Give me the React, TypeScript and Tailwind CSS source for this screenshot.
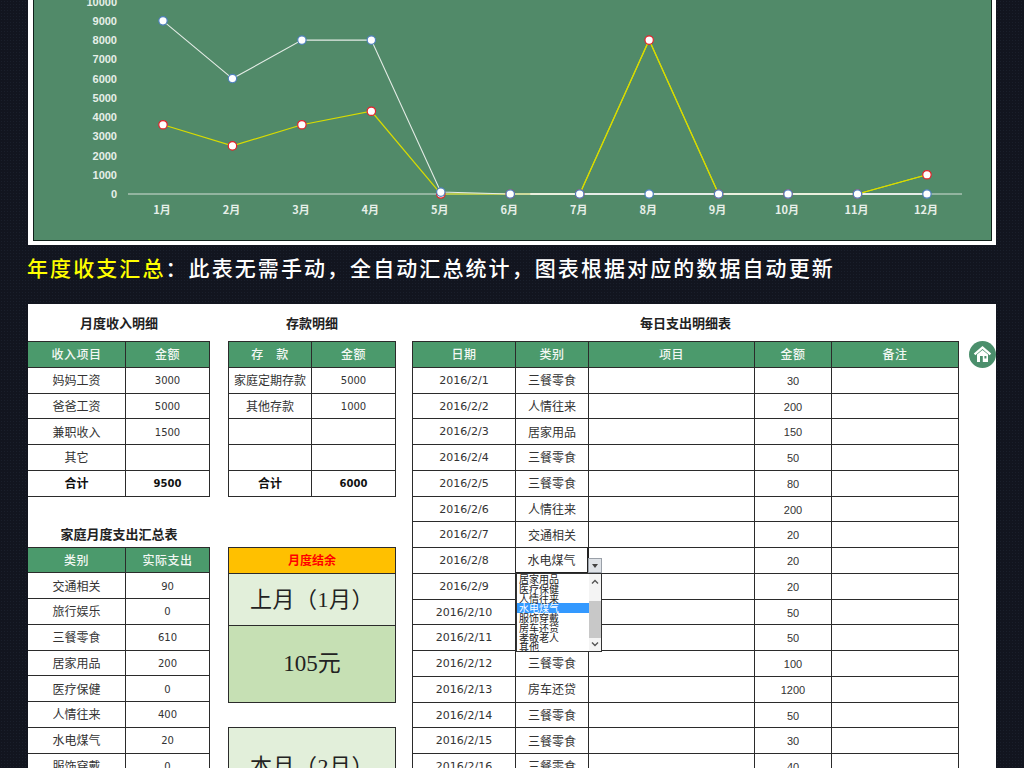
import React from "react";

const cjk = "font-['Noto_Sans_CJK_SC',sans-serif]";

const months = ["1月", "2月", "3月", "4月", "5月", "6月", "7月", "8月", "9月", "10月", "11月", "12月"];
const income = [9000, 6000, 8000, 8000, 100, 0, 0, 0, 0, 0, 0, 0];
const spend = [3600, 2500, 3600, 4300, 0, 0, 0, 8000, 0, 0, 0, 1000];
const ticks = [10000, 9000, 8000, 7000, 6000, 5000, 4000, 3000, 2000, 1000, 0];

const px = (i: number) => 163 + i * 69.45;
const py = (v: number) => 194 - (v / 1000) * 19.24;
const line = (d: number[]) => d.map((v, i) => `${px(i)},${py(v)}`).join(" ");

const daily = [
  ["2016/2/1", "三餐零食", "30"],
  ["2016/2/2", "人情往来", "200"],
  ["2016/2/3", "居家用品", "150"],
  ["2016/2/4", "三餐零食", "50"],
  ["2016/2/5", "三餐零食", "80"],
  ["2016/2/6", "人情往来", "200"],
  ["2016/2/7", "交通相关", "20"],
  ["2016/2/8", "水电煤气", "20"],
  ["2016/2/9", "三餐零食", "20"],
  ["2016/2/10", "三餐零食", "50"],
  ["2016/2/11", "三餐零食", "50"],
  ["2016/2/12", "三餐零食", "100"],
  ["2016/2/13", "房车还贷", "1200"],
  ["2016/2/14", "三餐零食", "50"],
  ["2016/2/15", "三餐零食", "30"],
  ["2016/2/16", "三餐零食", "40"],
];

const dropdown = ["居家用品", "医疗保健", "人情往来", "水电煤气", "服饰穿戴", "房车还贷", "孝敬老人", "其他"];

function Chart() {
  return (
    <div className="mx-[28px] bg-white pr-[4px] pb-[4px] pl-[5px]">
      <div className="border-x border-b border-[#10201a] bg-[#518a69]">
        <svg viewBox="34 0 957 240" width="957" height="240" className="block font-['Noto_Sans_CJK_SC',sans-serif]">
          {ticks.map((t) => (
            <text key={t} x="117" y={py(t) + 4} textAnchor="end" fontSize="11" fontWeight="700" fill="#e6efe8" fontFamily="'Liberation Sans'">
              {t}
            </text>
          ))}
          {months.map((m, i) => (
            <text key={m} x={px(i) - 1} y="214" textAnchor="middle" fontSize="11" fontWeight="700" fill="#e6efe8">
              {m}
            </text>
          ))}
          <line x1="128" y1="194" x2="962" y2="194" stroke="#d5dfd8" strokeWidth="1" />
          <polyline points={line(spend)} fill="none" stroke="#d8dc00" strokeWidth="1.2" />
          <polyline points={line(income)} fill="none" stroke="#e4ece6" strokeWidth="1.1" />
          {/* flat stretch of the income line sits on top of the spend line */}
          <line x1={px(5) + 20} y1="194" x2={px(11)} y2="194" stroke="#f4f7f5" strokeWidth="1.6" />
          <polyline points={`${px(10)},194 ${px(11)},${py(1000)}`} fill="none" stroke="#d8dc00" strokeWidth="1.2" />
          <polyline points={`${px(6)},194 ${px(7)},${py(8000)} ${px(8)},194`} fill="none" stroke="#d8dc00" strokeWidth="1.2" />
          {spend.map((v, i) => (
            <circle key={i} cx={px(i)} cy={py(v)} r="4.2" fill="#fff" stroke="#e8202a" strokeWidth="1.2" />
          ))}
          {income.map((v, i) => (
            <circle key={i} cx={px(i)} cy={py(v)} r="4.2" fill="#fff" stroke="#4f81bd" strokeWidth="1.2" />
          ))}
        </svg>
      </div>
    </div>
  );
}

function Cell({ children, className = "" }: { children?: React.ReactNode; className?: string }) {
  return (
    <div className={`flex items-center justify-center border-r border-b border-[#2b2b2b] text-[12px] text-[#333] ${className}`}>
      {children}
    </div>
  );
}

function Head({ children }: { children?: React.ReactNode }) {
  return <Cell className="bg-[#4b9a6c] font-medium tracking-[0.5px] !text-[#f2f7f3]">{children}</Cell>;
}

function Num({ children, bold }: { children?: React.ReactNode; bold?: boolean }) {
  return (
    <Cell className={`pt-[1px] font-['DejaVu_Sans',sans-serif] !text-[10px] ${bold ? "font-bold !text-[#111]" : ""}`}>
      {children}
    </Cell>
  );
}

function Title({ children }: { children: React.ReactNode }) {
  return <div className="flex h-[37px] items-center justify-center text-[13px] font-bold text-[#222]">{children}</div>;
}

function TwoCol({ rows, cols }: { rows: (string | undefined)[][]; cols: string }) {
  return (
    <div className={`grid auto-rows-[25.75px] border-t border-[#2b2b2b] ${cols}`}>
      <Head>{rows[0][0]}</Head>
      <Head>{rows[0][1]}</Head>
      {rows.slice(1).map((r, i) => (
        <React.Fragment key={i}>
          <Cell>{r[0]}</Cell>
          <Num>{r[1]}</Num>
        </React.Fragment>
      ))}
    </div>
  );
}

function Dropdown() {
  return (
    <>
      <div className="absolute top-[217px] left-[176px] flex h-[15px] w-[14px] items-center justify-center border border-[#9aa0a8] bg-[#dfe3e8]">
        <span className="mt-[1px] border-x-[3px] border-t-[4px] border-x-transparent border-t-[#444]" />
      </div>
      <div className="absolute top-[232px] left-[104px] flex h-[79px] w-[86px] border border-[#333] bg-white">
        <div className="w-[72px] text-[10px] leading-[9.75px] text-[#222]">
          {dropdown.map((d) => (
            <div key={d} className={`h-[9.75px] pl-[2px] ${d === "水电煤气" ? "bg-[#3399ff] text-white" : ""}`}>
              {d}
            </div>
          ))}
        </div>
        <div className="flex w-[12px] flex-col items-center bg-[#f4f4f4]">
          <svg viewBox="0 0 8 6" width="8" height="6" className="mt-[5px] block">
            <path d="M1 4.5 L4 1.5 L7 4.5" fill="none" stroke="#555" strokeWidth="1.4" />
          </svg>
          <div className="mt-[16px] h-[37px] w-full bg-[#c8c8c8]" />
          <svg viewBox="0 0 8 6" width="8" height="6" className="mt-[3px] block">
            <path d="M1 1.5 L4 4.5 L7 1.5" fill="none" stroke="#555" strokeWidth="1.4" />
          </svg>
        </div>
      </div>
    </>
  );
}

function HomeIcon() {
  return (
    <div className="mt-[37px] h-[27px] w-[27px]">
      <svg viewBox="0 0 27 27" width="27" height="27" className="block">
        <circle cx="13.5" cy="13.5" r="13.5" fill="#4b8f6c" />
        <path d="M13.5 5 L22.2 12.6 L20.7 14.2 L13.5 8 L6.3 14.2 L4.8 12.6 Z" fill="#fff" />
        <path
          fillRule="evenodd"
          d="M13.5 9 L19 13.6 V21 H8 V13.6 Z M11 15 V21 H13.8 V15 Z M15.4 15 V17.4 H17.4 V15 Z"
          fill="#fff"
        />
      </svg>
    </div>
  );
}

export default function App() {
  return (
    <div className={`h-[768px] overflow-hidden bg-[#12151f] bg-[radial-gradient(#1a1f2b_1px,transparent_1px)] bg-[length:3px_3px] ${cjk}`}>
      <Chart />
      <div className="flex h-[59px] items-center pb-[14px] pl-[27px] text-[21px] font-medium tracking-[2.08px] text-white">
        <span className="text-[#ffff00]">年度收支汇总</span>：此表无需手动，全自动汇总统计，图表根据对应的数据自动更新
      </div>
      <div className="mx-[28px] flex h-[464px] overflow-hidden bg-white">
        <div className="w-[182px] shrink-0">
          <Title>月度收入明细</Title>
          <TwoCol
            cols="grid-cols-[98px_84px]"
            rows={[
              ["收入项目", "金额"],
              ["妈妈工资", "3000"],
              ["爸爸工资", "5000"],
              ["兼职收入", "1500"],
              ["其它", ""],
            ]}
          />
          <div className="grid h-[25.75px] grid-cols-[98px_84px]">
            <Cell className="font-bold !text-[#111]">合计</Cell>
            <Num bold>9500</Num>
          </div>
          <div className="mt-[24px] flex h-[26px] items-center justify-center text-[13px] font-bold text-[#222]">
            家庭月度支出汇总表
          </div>
          <TwoCol
            cols="grid-cols-[98px_84px]"
            rows={[
              ["类别", "实际支出"],
              ["交通相关", "90"],
              ["旅行娱乐", "0"],
              ["三餐零食", "610"],
              ["居家用品", "200"],
              ["医疗保健", "0"],
              ["人情往来", "400"],
              ["水电煤气", "20"],
              ["服饰穿戴", "0"],
            ]}
          />
        </div>

        <div className="ml-[18px] w-[168px] shrink-0">
          <Title>存款明细</Title>
          <div className="border-l border-[#2b2b2b]">
            <TwoCol
              cols="grid-cols-[83px_84px]"
              rows={[
                ["存　款", "金额"],
                ["家庭定期存款", "5000"],
                ["其他存款", "1000"],
                ["", ""],
                ["", ""],
              ]}
            />
            <div className="grid h-[25.75px] grid-cols-[83px_84px]">
              <Cell className="font-bold !text-[#111]">合计</Cell>
              <Num bold>6000</Num>
            </div>
          </div>
          <div className="mt-[50px] border-t border-l border-[#2b2b2b]">
            <Cell className="h-[26px] bg-[#ffc000] font-bold !text-[#ff0000]">月度结余</Cell>
            <Cell className="h-[52px] bg-[#e2efda] font-['Liberation_Serif','Noto_Sans_CJK_SC',serif] tracking-[0.5px] !text-[22px] !text-[#222]">上月（1月）</Cell>
            <Cell className="h-[77px] bg-[#c6e0b4] pt-[2px] font-['Liberation_Serif','Noto_Sans_CJK_SC',serif] !text-[23px] !text-[#222]">105元</Cell>
          </div>
          <div className="mt-[24px] border-t border-l border-[#2b2b2b]">
            <Cell className="h-[76px] bg-[#e2efda] pt-[2px] font-['Liberation_Serif','Noto_Sans_CJK_SC',serif] tracking-[0.5px] !text-[22px] !text-[#222]">本月（2月）</Cell>
          </div>
        </div>

        <div className="ml-[16px] w-[547px] shrink-0">
          <Title>每日支出明细表</Title>
          <div className="relative">
            <div className="grid auto-rows-[25.75px] grid-cols-[103px_73px_166px_77px_127px] border-t border-l border-[#2b2b2b]">
              <Head>日期</Head>
              <Head>类别</Head>
              <Head>项目</Head>
              <Head>金额</Head>
              <Head>备注</Head>
              {daily.map((r) => (
                <React.Fragment key={r[0]}>
                  <Cell className="pt-[2px] font-['DejaVu_Sans',sans-serif] !text-[11px]">{r[0]}</Cell>
                  <Cell className={r[0] === "2016/2/8" ? "border-r-2 border-b-2 border-[#222]" : ""}>{r[1]}</Cell>
                  <Cell />
                  <Cell className="pt-[2px] font-['Liberation_Sans',sans-serif] !text-[11px]">{r[2]}</Cell>
                  <Cell />
                </React.Fragment>
              ))}
            </div>
            <Dropdown />
          </div>
        </div>

        <div className="ml-[10px]">
          <HomeIcon />
        </div>
      </div>
    </div>
  );
}
